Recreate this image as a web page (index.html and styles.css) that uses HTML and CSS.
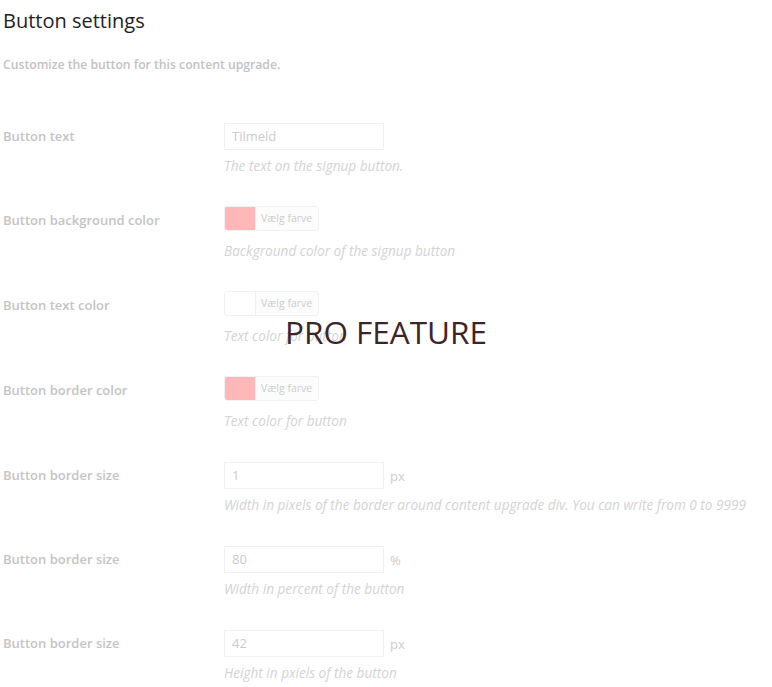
FILE: index.html
```html
<!DOCTYPE html>
<html>
<head>
<meta charset="utf-8">
<title>Button settings</title>
<link rel="stylesheet" href="styles.css">
</head>
<body>
<div class="page">
  <h2 class="title">Button settings</h2>
  <p class="intro">Customize the button for this content upgrade.</p>

  <div class="rows">
    <div class="row row-input">
      <div class="label">Button text</div>
      <div class="field">
        <div class="control"><div class="input">Tilmeld</div></div>
        <div class="desc">The text on the signup button.</div>
      </div>
    </div>

    <div class="row row-picker">
      <div class="label">Button background color</div>
      <div class="field">
        <div class="picker"><span class="swatch pink"></span><span class="pick-text">Vælg farve</span></div>
        <div class="desc">Background color of the signup button</div>
      </div>
    </div>

    <div class="row row-picker">
      <div class="label">Button text color</div>
      <div class="field">
        <div class="picker"><span class="swatch white"></span><span class="pick-text">Vælg farve</span></div>
        <div class="desc">Text color for button</div>
      </div>
    </div>

    <div class="row row-picker">
      <div class="label">Button border color</div>
      <div class="field">
        <div class="picker"><span class="swatch pink"></span><span class="pick-text">Vælg farve</span></div>
        <div class="desc">Text color for button</div>
      </div>
    </div>

    <div class="row row-input">
      <div class="label">Button border size</div>
      <div class="field">
        <div class="control"><div class="input">1</div><span class="unit">px</span></div>
        <div class="desc">Width in pixels of the border around content upgrade div. You can write from 0 to 9999</div>
      </div>
    </div>

    <div class="row row-input">
      <div class="label">Button border size</div>
      <div class="field">
        <div class="control"><div class="input">80</div><span class="unit">%</span></div>
        <div class="desc">Width in percent of the button</div>
      </div>
    </div>

    <div class="row row-input">
      <div class="label">Button border size</div>
      <div class="field">
        <div class="control"><div class="input">42</div><span class="unit">px</span></div>
        <div class="desc">Height in pxiels of the button</div>
      </div>
    </div>
  </div>

  <div class="pro">PRO FEATURE</div>
</div>
</body>
</html>
```

FILE: styles.css
```css
html, body {
  margin: 0;
  padding: 0;
  background: #ffffff;
}

body {
  font-family: "Open Sans", "Noto Sans", "Liberation Sans", sans-serif;
  width: 772px;
  height: 687px;
  overflow: hidden;
}

.page {
  position: relative;
  padding-left: 3px;
  height: 687px;
}

.title {
  margin: 0;
  padding-top: 6px;
  font-size: 20px;
  line-height: 29px;
  font-weight: 400;
  color: #1d2327;
}

.intro {
  margin: 20px 0 0;
  font-size: 12.2px;
  line-height: 20px;
  font-weight: 600;
  color: #c2c2c2;
}

.rows {
  margin-top: 33px;
  display: flex;
  flex-direction: column;
}

.row {
  display: grid;
  grid-template-columns: 221px 1fr;
}

.row-input {
  padding: 15px 0 16px;
}

.row-picker {
  padding: 14px 0 16px;
}

.label {
  font-size: 13px;
  font-weight: 600;
  color: #c4c4c4;
}

.row-input .label {
  line-height: 27px;
}

.row-picker .label {
  line-height: 25px;
  margin-top: 2px;
}

.control {
  display: flex;
  align-items: center;
  gap: 6px;
  height: 27px;
}

.input {
  box-sizing: border-box;
  width: 160px;
  height: 27px;
  border: 1px solid #f1f1f1;
  padding: 0 7px;
  font-size: 13px;
  line-height: 25px;
  color: #cbcbcb;
}

.unit {
  font-size: 13px;
  color: #cccccc;
}

.desc {
  margin-top: 6px;
  font-size: 13.6px;
  line-height: 20px;
  font-style: italic;
  color: #d3d3d3;
  white-space: nowrap;
}

.row-picker .desc {
  margin-top: 10px;
}

.picker {
  box-sizing: border-box;
  display: flex;
  width: 95px;
  height: 25px;
  border: 1px solid #f1f1f1;
  border-radius: 3px;
  overflow: hidden;
  background: #fcfcfc;
}

.swatch {
  width: 30px;
  height: 100%;
  border-right: 1px solid #f1f1f1;
}

.swatch.pink { background: #ffb8b8; }
.swatch.white { background: #ffffff; }

.pick-text {
  flex: 1;
  padding-left: 5px;
  font-size: 10.5px;
  line-height: 23px;
  color: #cccccc;
}

.pro {
  position: absolute;
  left: 0;
  right: 0;
  top: 311px;
  text-align: center;
  font-size: 31.5px;
  line-height: 42px;
  font-weight: 400;
  color: #3c2429;
}
```
